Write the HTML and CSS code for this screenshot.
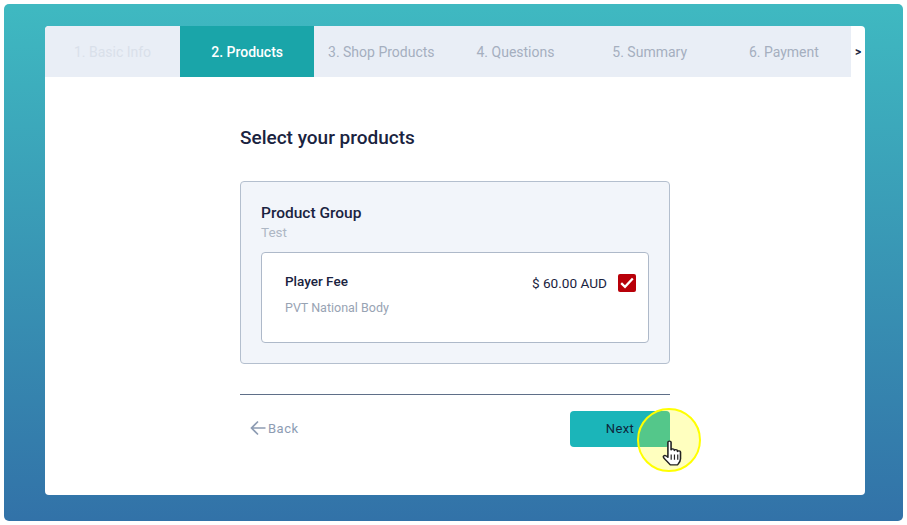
FILE: index.html
```html
<!DOCTYPE html>
<html lang="en">
<head>
    <meta charset="UTF-8">
    <meta name="viewport" content="width=device-width, initial-scale=1.0">
    <title>Select your products</title>
    <link rel="stylesheet" href="styles.css">
</head>
<body>
    <div class="page">
        <div class="card">
            <nav class="steps">
                <div class="step-list">
                    <div class="step step-done">1. Basic Info</div>
                    <div class="step step-active">2. Products</div>
                    <div class="step">3. Shop Products</div>
                    <div class="step">4. Questions</div>
                    <div class="step">5. Summary</div>
                    <div class="step">6. Payment</div>
                </div>
                <div class="step-more">&gt;</div>
            </nav>
            <main class="content">
                <h1 class="title">Select your products</h1>
                <section class="group">
                    <h2 class="group-name">Product Group</h2>
                    <div class="group-desc">Test</div>
                    <div class="product">
                        <div class="product-info">
                            <div class="product-name">Player Fee</div>
                            <div class="product-org">PVT National Body</div>
                        </div>
                        <div class="product-price">$ 60.00 AUD</div>
                        <span class="check">
                            <svg width="14" height="12" viewBox="0 0 14 12"><path d="M1.200 6.200 5 9.800 12.800 1.500" fill="none" stroke="#fff" stroke-width="2.300"/></svg>
                        </span>
                    </div>
                </section>
                <div class="actions">
                    <button class="back-button">
                        <svg width="16" height="16" viewBox="0 0 16 16"><path d="M15.500 8H1.500M8 1.500 1.500 8 8 14.500" fill="none" stroke="#8d9cb3" stroke-width="1.700"/></svg>
                        Back
                    </button>
                    <button class="next-button">Next</button>
                </div>
            </main>
        </div>
        <!-- click highlight and mouse pointer from the recording -->
        <div class="highlight"></div>
        <svg class="pointer" width="21" height="26" viewBox="0 0 16 25" preserveAspectRatio="none">
            <path d="M4.500 2.200c0-1.600 2.400-1.600 2.400 0v7.200c.2-1.200 2.300-1.200 2.500.1v.6c.2-1.100 2.200-1.100 2.400.2v.8c.3-1 2.200-.9 2.300.4v6.500c0 2.600-1.200 4.200-2.200 5.800H6.200C5 21.800 2.900 19.500 1.500 17.400.4 15.800 1.700 14.200 3.200 15.300l1.300 1.300z" fill="#fff" stroke="#222" stroke-width="1.200" stroke-linejoin="round"/>
            <path d="M7 14v5M9.500 14v5M12 14v5" stroke="#222" stroke-width=".9"/>
        </svg>
    </div>
</body>
</html>
```

FILE: styles.css
```css
html,body{
    margin: 0;
    height: 100%;
    background-color: #fff;
}
body{
    font-family: Roboto, "Liberation Sans", sans-serif;
    color: #1a2340;
}
.page{
    position: relative;
    box-sizing: border-box;
    margin: 4px;
    width: 899px;
    height: 517px;
    padding: 22px 38px 26px 41px;
    border-radius: 5px;
    background: linear-gradient(to bottom,#3fb9c1,#3272a8);
}
.card{
    height: 469px;
    background-color: #fff;
    border-radius: 4px;
    overflow: hidden;
}
.steps{
    display: flex;
    height: 51px;
}
.step-list{
    display: grid;
    grid-template-columns: 135px repeat(5,1fr);
    width: 806px;
    background-color: #e9eef6;
}
.step{
    display: flex;
    align-items: center;
    justify-content: center;
    font-size: 14px;
    color: #a5afbf;
}
.step-done{
    color: #d9e0ea;
}
.step-active{
    background-color: #1aa5a9;
    color: #fff;
    font-weight: 500;
}
.step-more{
    flex: 1;
    display: flex;
    align-items: center;
    justify-content: center;
    font-size: 12px;
    font-weight: 700;
}
.content{
    width: 430px;
    margin-left: 195px;
}
.title{
    margin: 49px 0 31px;
    font-size: 19px;
    line-height: 24px;
    font-weight: 500;
}
.group{
    box-sizing: border-box;
    height: 183px;
    padding: 22px 20px 20px;
    background-color: #f2f5fa;
    border: 1px solid #b4bfce;
    border-radius: 4px;
}
.group-name{
    margin: 0;
    font-size: 15.500px;
    line-height: 19px;
    font-weight: 500;
}
.group-desc{
    margin-top: 1px;
    font-size: 13.500px;
    line-height: 17px;
    color: #aeb7c4;
}
.product{
    box-sizing: border-box;
    display: flex;
    align-items: flex-start;
    height: 91px;
    margin-top: 11px;
    padding: 20px 12px 0 23px;
    background-color: #fff;
    border: 1px solid #aeb9c9;
    border-radius: 4px;
}
.product-info{
    flex: 1;
}
.product-name{
    font-size: 13.500px;
    line-height: 17px;
    font-weight: 500;
}
.product-org{
    margin-top: 9px;
    font-size: 12.500px;
    line-height: 17px;
    color: #98a3b3;
}
.product-price{
    font-size: 13.600px;
    line-height: 18px;
    margin-top: 1px;
    margin-right: 11px;
}
.check{
    display: flex;
    align-items: center;
    justify-content: center;
    width: 18px;
    height: 18px;
    margin-top: 1px;
    background-color: #b80009;
    border-radius: 2px;
}
.actions{
    display: flex;
    justify-content: space-between;
    align-items: center;
    margin-top: 30px;
    padding-top: 16px;
    border-top: 1px solid #5f6f88;
}
.back-button{
    display: flex;
    align-items: center;
    gap: 2px;
    padding: 0 0 2px 10px;
    border: none;
    background: none;
    font-family: inherit;
    font-size: 13px;
    letter-spacing: 0.5px;
    color: #8d9cb3;
}
.next-button{
    width: 100px;
    height: 36px;
    padding-bottom: 2px;
    border: none;
    border-radius: 4px;
    background-color: #1bb5b9;
    font-family: inherit;
    font-size: 13px;
    font-weight: 400;
    letter-spacing: 0.4px;
    color: #0e263c;
}
.highlight{
    position: absolute;
    left: 633px;
    top: 404px;
    box-sizing: border-box;
    width: 64px;
    height: 64px;
    border: 2px solid #ffff00;
    border-radius: 50%;
    background-color: rgba(255,255,0,0.25);
}
.pointer{
    position: absolute;
    left: 658px;
    top: 436px;
}
```
